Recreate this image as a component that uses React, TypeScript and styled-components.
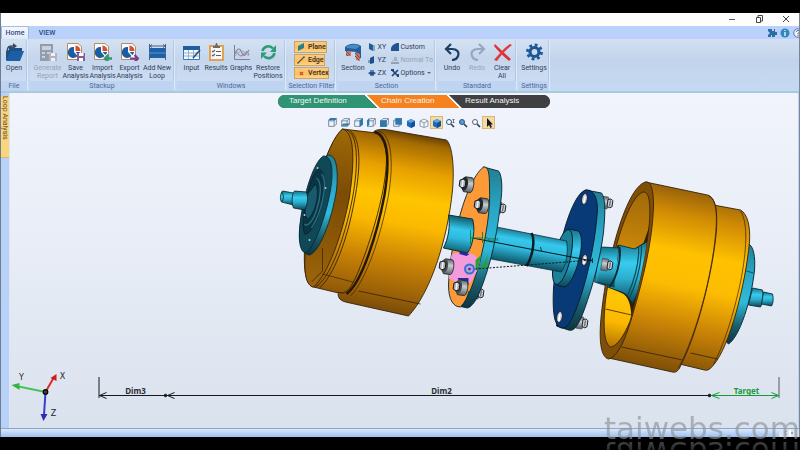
import React from 'react';
import styled, { createGlobalStyle, css } from 'styled-components';

const GlobalStyle = createGlobalStyle`
  * { box-sizing: border-box; }
  html, body, #root { height: 100%; }
  body {
    margin: 0;
    background: #000;
    overflow: hidden;
    font-family: Roboto, "Noto Sans", sans-serif;
    font-size: 7px;
    line-height: 8px;
    color: #2c3d5c;
  }
  button {
    font: inherit;
    color: inherit;
    background: none;
    border: 0;
    padding: 0;
    margin: 0;
  }
  svg { display: block; flex: none; }
`;

const Screen = styled.div`
  position: relative;
  height: 100vh;
  padding: 13px 0;
  overflow: hidden;
  background: #000;
`;

const Window = styled.div`
  height: 100%;
  display: flex;
  flex-direction: column;
  border-left: 1px solid #6d7d96;
  border-right: 1px solid #7a8595;
  background: #bcd3f8;
  overflow: hidden;
`;

const TitleBar = styled.header`
  flex: none;
  height: 13px;
  display: flex;
  justify-content: flex-end;
  background: #fdfdfe;
`;

const CaptionButton = styled.button`
  width: 27px;
  padding-bottom: 2px;
  display: flex;
  align-items: center;
  justify-content: center;
`;

const TabBar = styled.nav`
  flex: none;
  height: 13px;
  display: flex;
  background: #bad1fc;
`;

const Tab = styled.button<{ $active?: boolean }>`
  width: ${p => (p.$active ? 28 : 36)}px;
  font-weight: 500;
  color: #2f4a78;
  ${p => p.$active && css`
    background: linear-gradient(#f5f9ff, #dfe9f8);
    border: 1px solid #9dbbe6;
    border-bottom: 0;
    border-radius: 2px 2px 0 0;
  `}
`;

const TabTools = styled.div`
  margin-left: auto;
  margin-right: -4px;
  display: flex;
  align-items: center;
  gap: 3px;
`;

const Ribbon = styled.div`
  flex: none;
  display: flex;
  align-items: flex-start;
  gap: 2px;
  height: 54px;
  padding-top: 1px;
  background: linear-gradient(#d3e0f1, #c2d4ec 40%, #c6d9f2);
  border-bottom: 2px solid #a9c9dc;
`;

const Group = styled.section<{ $w: number }>`
  width: ${p => p.$w}px;
  height: 51px;
  flex: none;
  display: flex;
  flex-direction: column;
  border-right: 1px solid #dfeaf8;
  border-radius: 2px;
  background: linear-gradient(#d4e1f2, #c5d6ed 35%, #cfdef3);
  box-shadow: inset -1px 0 0 #b1c7e5;
`;

const GroupBody = styled.div`
  flex: 1;
  display: flex;
  justify-content: center;
  padding-top: 3px;
`;

const GroupCaption = styled.div`
  height: 10px;
  line-height: 10px;
  text-align: center;
  white-space: nowrap;
  color: #4a6899;
  background: #bfd4f1;
`;

const ToolButton = styled.button<{ $w: number }>`
  width: ${p => p.$w}px;
  flex: none;
  display: flex;
  flex-direction: column;
  align-items: center;
  gap: 3px;
  white-space: pre;
  &:disabled { color: #98a3b5; }
`;

const FilterColumn = styled.div`
  display: flex;
  flex-direction: column;
  align-items: flex-start;
  gap: 1px;
  margin-top: -2px;
`;

const FilterButton = styled.button<{ $w: number }>`
  width: ${p => p.$w}px;
  height: 12px;
  display: flex;
  align-items: center;
  gap: 3px;
  padding-left: 2px;
  color: #3d3526;
  font-weight: 600;
  background: linear-gradient(#f9c988, #fdbf62 60%, #ffd587);
  border: 1px solid #cda363;
`;

const SmallColumn = styled.div<{ $w: number }>`
  width: ${p => p.$w}px;
  display: flex;
  flex-direction: column;
  gap: 5px;
`;

const SmallButton = styled.button`
  height: 8px;
  display: flex;
  align-items: center;
  gap: 2px;
  white-space: nowrap;
  &:disabled { color: #98a3b5; }
`;

const Workspace = styled.main`
  flex: 1;
  min-height: 0;
  display: flex;
`;

const Dock = styled.aside`
  width: 9px;
  flex: none;
  padding-top: 3px;
  border-right: 1px solid #dbe7f8;
  background: #b7d1f7;
`;

const DockTab = styled.button`
  display: block;
  width: 8px;
  height: 62px;
  writing-mode: vertical-rl;
  text-align: left;
  white-space: nowrap;
  color: #5d502b;
  background: #fbd57a;
  border-bottom: 1px solid #e0b95c;
`;

const Canvas = styled.div`
  flex: 1;
  min-width: 0;
  display: grid;
  margin-right: 1px;
  background: linear-gradient(#f1f4fc, #e8edf7 45%, #dae2ed);
`;

const Scene = styled.svg`
  grid-area: 1 / 1;
  width: 100%;
  height: 100%;
  min-height: 0;
`;

const Overlay = styled.div`
  grid-area: 1 / 1;
  z-index: 1;
  justify-self: center;
  align-self: start;
  padding-top: 2px;
  padding-left: 20px;
`;

const Steps = styled.div`
  display: flex;
  height: 13px;
  border-radius: 7px;
  overflow: hidden;
  background: #403f42;
`;

const Step = styled.button<{ $w: number; $pad: number; $bg: string; $prev?: string }>`
  width: ${p => p.$w}px;
  padding-left: ${p => p.$pad}px;
  padding-bottom: 2px;
  text-align: left;
  font: 8px/11px "Liberation Sans", Arial, sans-serif;
  color: #f4f4f0;
  background: ${p => p.$prev
    ? `linear-gradient(45deg, ${p.$prev} 9px, #fff 9px 10px, ${p.$bg} 11px)`
    : p.$bg};
`;

const ViewBar = styled.div`
  display: flex;
  justify-content: center;
  padding: 8px 7px 0 0;
`;

const ViewButton = styled.button<{ $on?: boolean }>`
  width: 13px;
  height: 13px;
  display: grid;
  place-items: center;
  ${p => p.$on && css`
    background: #f3dba6;
    border: 1px solid #d9b877;
  `}
`;

const StatusBar = styled.footer`
  flex: none;
  height: 9px;
  display: flex;
  justify-content: flex-end;
  border-top: 1px solid #8fa5c4;
  background: linear-gradient(#dce9fc, #b4cff4 60%, #9fc0ec);
`;

const Grip = styled.div`
  width: 20px;
  display: grid;
  place-items: center;
  background: #d8e2f1;
`;

const Watermark = styled.div`
  position: absolute;
  right: 0;
  bottom: 10px;
  height: 23px;
  font: 31px/23px "DejaVu Sans", sans-serif;
  color: rgba(142, 147, 154, 0.66);
  -webkit-box-reflect: below 1px linear-gradient(transparent, rgba(0, 0, 0, 0.7));
`;

/* ---------- ribbon icons ---------- */

type P = { children: React.ReactNode; w?: number; h?: number; box?: string };
const Ico = ({ children, w = 19, h = 18, box }: P) => (
  <svg width={w} height={h} viewBox={box || `0 0 ${w} ${h}`} fill="none" aria-hidden="true">{children}</svg>
);

const OpenIcon = () => (
  <Ico>
    <path d="M1 8V17H3L7 8H17V5H10L8 4H4V7Z" fill="#1f4f84" />
    <path d="M6 8H19L15 18H1Z" fill="#1d5fa6" />
    <path d="M2 9C2 4 4 2.500 9 3" stroke="#3d4957" strokeWidth="1.500" />
    <path d="M8 0L12 3L8 6Z" fill="#3d4957" />
  </Ico>
);
const GenerateIcon = () => (
  <Ico>
    <path d="M2 1H15V18H2Z" fill="#929cab" />
    <path d="M4 3H13V7H4ZM4 9H7V11H4ZM9 9H13V11H9ZM4 13H7V15H4Z" fill="#c9d1dc" />
    <path d="M11 10H19V18H11Z" fill="#b4b3c3" />
    <path d="M13 10H17V13H13ZM13 15H17V18H13Z" fill="#eef1f6" />
  </Ico>
);
const Report = ({ children }: { children: React.ReactNode }) => (
  <Ico>
    <path d="M1.500 .5H12L15.500 3.500V16.500H1.500Z" fill="#fbfbfc" stroke="#b58d68" />
    <path d="M8 4V9L11.500 13A5.500 5.500 0 1 1 8 4Z" fill="#1c5da2" />
    <path d="M9.500 2.500A5.500 5.500 0 0 1 14.500 8H9.500Z" fill="#d5502f" />
    <path d="M9.500 9H14A5 5 0 0 1 12.500 12Z" fill="#1c5da2" />
    {children}
  </Ico>
);
const SaveIcon = () => (
  <Report>
    <path d="M11 10H19V18H11Z" fill="#8b5c92" />
    <path d="M13 10H17.500V13H13ZM13 15H17V18H13Z" fill="#fff" />
  </Report>
);
const ImportIcon = () => (
  <Report><path d="M19 15.500H13M15.500 12L12 15.500L15.500 19" stroke="#2f9b6c" strokeWidth="2.500" /></Report>
);
const ExportIcon = () => (
  <Report><path d="M10 15.500H17M14.500 12L18 15.500L14.500 19" stroke="#7b3d86" strokeWidth="2.200" /></Report>
);
const LoopIcon = () => (
  <Ico>
    <path d="M1 5H18V9H1ZM1 11H18V15H1Z" fill="#1e61a8" />
    <path d="M1.500 1V17M17.500 1V17M2 3H17M4 1.500L2 3L4 4.500M15 1.500L17 3L15 4.500" stroke="#40628c" />
    <path d="M1 10H18" stroke="#3b79b8" strokeWidth="2" />
  </Ico>
);
const InputIcon = () => (
  <Ico>
    <path d="M1.500 3.500H17.500V16.500H1.500Z" fill="#f6f9fd" stroke="#3a78b4" />
    <path d="M1 3H18V7H1Z" fill="#215e9f" />
    <path d="M2 10H17M2 13H17M6.500 7V16M11.500 7V16" stroke="#8fb3d6" />
    <path d="M11 15L18 7" stroke="#33526f" strokeWidth="1.600" />
  </Ico>
);
const ResultsIcon = () => (
  <Ico>
    <path d="M2 2H17V18H2Z" fill="#e2a254" />
    <path d="M4 4H15V16H4Z" fill="#fbfaf8" />
    <path d="M6 3H8L9 0H10L11 3H13V5H6Z" fill="#6f6a68" />
    <path d="M5 8L6 9L8 7M9 8.500H14M5 12L6 13L8 11M9 12.500H14" stroke="#5c5d66" strokeWidth="1.100" />
  </Ico>
);
const GraphsIcon = () => (
  <Ico>
    <path d="M2.500 2V16.500H18" stroke="#75859d" />
    <path d="M3 11C6 4 8 5 10 10S14 11 17 7" stroke="#7a879b" strokeWidth="1.200" />
    <path d="M3 8C6 10 8 15 11 12S15 6 17 12" stroke="#ac8d97" strokeWidth="1.200" />
    <path d="M3 13L7 9L11 8L17 13" stroke="#9aaabf" />
  </Ico>
);
const RestoreIcon = () => (
  <Ico>
    <path d="M3.500 8A6 6 0 0 1 14 5.500M15.500 10A6 6 0 0 1 5 13" stroke="#2f9b77" strokeWidth="2.600" />
    <path d="M17 2V9H11ZM2 16V9.500H8Z" fill="#2f9b77" />
  </Ico>
);
const SectionIcon = () => (
  <Ico>
    <path d="M1 4C5 0 13 0 17 3V15L12 17V9L1 8Z" fill="#1f5f9f" />
    <path d="M2 4C6 1 12 1 16 3L12 6L3 5Z" fill="#4a89c0" />
    <path d="M2 8H7V13H2ZM11 9L16 11V18L12 17Z" fill="#c97762" />
    <path d="M2 8L6 12M2 11L4 13M11 10L16 15M11 13L15 17" stroke="#7d4f55" />
  </Ico>
);
const UndoIcon = () => (
  <Ico>
    <path d="M4 6H9C14 6 16.500 9 15 13C14 15.500 12 17 9 17" stroke="#1c3f66" strokeWidth="2.200" />
    <path d="M8 1L3 6L8 11" stroke="#1c3f66" strokeWidth="2.200" />
  </Ico>
);
const RedoIcon = () => (
  <Ico>
    <path d="M15 6H10C5 6 2.500 9 4 13C5 15.500 7 17 10 17" stroke="#97a7bd" strokeWidth="2.200" />
    <path d="M11 1L16 6L11 11" stroke="#97a7bd" strokeWidth="2.200" />
  </Ico>
);
const ClearIcon = () => (
  <Ico>
    <path d="M2 1C7 6 12 11 18 16L16 18C10 13 5 8 1 3Z" fill="#dc3136" />
    <path d="M17 1L19 2C13 7 8 12 4 18L1 17C6 11 11 5 17 1Z" fill="#e03a3d" />
  </Ico>
);
const GearIcon = () => (
  <Ico>
    <circle cx="9.500" cy="9" r="4.500" stroke="#1c5694" strokeWidth="3.200" />
    <circle cx="9.500" cy="9" r="7" stroke="#1c5694" strokeWidth="2.800" strokeDasharray="2.750 2.750" />
  </Ico>
);

const small: Record<string, React.ReactNode> = {
  xy: <><path d="M1 0L5 2V8L1 6Z" fill="#1f5f92" /><path d="M5 2H7V8H5Z" fill="#85a9c9" /></>,
  yz: <><path d="M2 2L6 0V7L2 8Z" fill="#1f4f88" /><path d="M0 4H2V7H0Z" fill="#7a9cc2" /></>,
  zx: <><path d="M0 4L4 2L8 4L4 7Z" fill="#1f4f88" /><path d="M2 1H6V3H2ZM2 6H6V7H2Z" fill="#5981ae" /></>,
  custom: <path d="M0 5C1 2 4 0 8 0V8H0Z" fill="#1d5592" />,
  normal: <><path d="M0 6H8V8H0Z" fill="#8fa0b7" /><path d="M3 1H6V5H3ZM1 4H7V5H1Z" fill="#a6b3c5" /></>,
  options: <><path d="M1 1L7 7M7 1L1 7" stroke="#1f4678" strokeWidth="1.700" /><path d="M0 0H3V2H0ZM6 5H8V8H6Z" fill="#1f4678" /></>,
  plane: <path d="M1 3L7 0V5L1 8Z" fill="#24838b" />,
  edge: <path d="M1 7L7 1M0 7H2M6 1H8" stroke="#59513b" strokeWidth="1.100" />,
  vertex: <path d="M3 3L6 6M6 3L3 6" stroke="#c55527" strokeWidth="1.400" />,
};
const Small = ({ k }: { k: string }) => <Ico w={8} h={8}>{small[k]}</Ico>;

/* ---------- view toolbar icons ---------- */

const cubeLines = 'M1.500 3.500H6.500V8.500H1.500ZM1.500 3.500L3.500 1.500H8.500L6.500 3.500M8.500 1.500V6.500L6.500 8.500';
const faces = [
  'M1 3L3 1H9L7 3Z',
  'M1 8H7L9 6H3Z',
  'M6 3L9 1V7L6 9Z',
  'M1 3L3 1V7L1 9Z',
  'M1 3H7V9H1Z',
  'M3 1H9V7H3Z',
];
const FaceCube = ({ d }: { d: string }) => (
  <Ico w={11} h={11} box="0 0 10 10">
    <path d={cubeLines} stroke="#6b8298" strokeWidth=".8" />
    <path d={d} fill="#2d78ae" />
  </Ico>
);
const SolidCube = () => (
  <Ico w={10} h={10}>
    <path d="M1 3L5 1L9 3V8L5 10L1 8Z" fill="#1d69bd" />
    <path d="M1 3L5 1L9 3L5 5Z" fill="#5aa6e3" />
    <path d="M5 5L9 3V8L5 10Z" fill="#174f91" />
  </Ico>
);
const WireCube = () => (
  <Ico w={10} h={10}>
    <path d="M1 3L5 1L9 3V8L5 9.500L1 8ZM1 3L5 5L9 3M5 5V9" stroke="#8593a0" strokeWidth=".9" fill="#f5f7fb" />
  </Ico>
);
const Lens = ({ kind }: { kind: number }) => (
  <Ico w={10} h={10}>
    <circle cx="4" cy="4" r="2.500" stroke={kind === 2 ? '#5c6873' : '#245580'} fill={kind === 1 ? '#5e9bcc' : '#f5f8fc'} />
    <path d="M6 6L9 9" stroke="#263b4e" strokeWidth="1.600" />
    {kind === 0 && <path d="M8.500 1V5M7.500 2L8.500 1L9.500 2M7.500 4L8.500 5L9.500 4" stroke="#44617b" strokeWidth=".8" />}
  </Ico>
);
const Pointer = () => (
  <Ico w={10} h={10}><path d="M3 0V9L5 7L6.500 10L8 9L6.500 6.500H9Z" fill="#151719" /></Ico>
);

/* ---------- 3D model ---------- */

const Bolt = ({ x, y, dim }: { x: number; y: number; dim?: boolean }) => (
  <g transform={`translate(${x} ${y}) rotate(8)`}>
    <path d="M-2 -7H5C8 -6 8 7 5 8H-2C-4 5 -4 -4 -2 -7Z" fill="url(#steel)" stroke="#20262b" strokeWidth=".8" />
    <ellipse cx="-2" cy="0" rx="3.500" ry="7" fill={dim ? '#454d4e' : '#23292c'} />
    <path d="M-7 -3L-4 -4.500L-1 -3V3L-4 4.500L-7 3Z" fill="#a9b0b5" stroke="#111" strokeWidth=".9" />
    <path d="M-4 -3.500V3.500" stroke="#f6f8f9" strokeWidth="1.400" />
  </g>
);
const Nut = ({ x, y }: { x: number; y: number }) => (
  <g transform={`translate(${x} ${y}) rotate(8)`}>
    <path d="M-6 -6H0C2 -4 2 5 0 6H-6Z" fill="url(#steel)" stroke="#3b444a" strokeWidth=".6" />
    <path d="M0 -3.500L3 -4.500L5 -3V3L3 4.500L0 3.500Z" fill="#c9ced2" stroke="#181c1f" strokeWidth=".9" />
    <path d="M2.500 -3V3" stroke="#51585d" />
  </g>
);
const Hole = ({ x, y }: { x: number; y: number }) => (
  <g transform={`translate(${x} ${y}) rotate(10)`}>
    <ellipse rx="2.800" ry="5.500" fill="#c7cdd0" stroke="#101820" strokeWidth=".9" />
    <path d="M0 -3V4" stroke="#fff" strokeWidth="1.600" />
  </g>
);

const Model = () => (
  <Scene viewBox="10 93 787 335" preserveAspectRatio="xMidYMid meet" role="img" aria-label="Shaft assembly with dimension loop">
    <defs>
      <linearGradient id="drumL" gradientUnits="userSpaceOnUse" x1="410" y1="133" x2="377" y2="312">
        <stop offset="0" stopColor="#684006" />
        <stop offset=".05" stopColor="#a36a02" />
        <stop offset=".2" stopColor="#e7a000" />
        <stop offset=".36" stopColor="#ffc500" />
        <stop offset=".5" stopColor="#fbb900" />
        <stop offset=".72" stopColor="#c68005" />
        <stop offset=".9" stopColor="#985f08" />
        <stop offset="1" stopColor="#754909" />
      </linearGradient>
      <linearGradient id="drumR" gradientUnits="userSpaceOnUse" x1="692" y1="190" x2="655" y2="371">
        <stop offset="0" stopColor="#96600a" />
        <stop offset=".14" stopColor="#d08b04" />
        <stop offset=".34" stopColor="#ffc100" />
        <stop offset=".52" stopColor="#fdbc02" />
        <stop offset=".74" stopColor="#c98306" />
        <stop offset="1" stopColor="#7b4c08" />
      </linearGradient>
      <linearGradient id="coneL" gradientUnits="userSpaceOnUse" x1="345" y1="130" x2="318" y2="286">
        <stop offset="0" stopColor="#9e6906" />
        <stop offset=".4" stopColor="#7c4c05" />
        <stop offset=".75" stopColor="#8d5906" />
        <stop offset="1" stopColor="#9c650a" />
      </linearGradient>
      <linearGradient id="bore" gradientUnits="userSpaceOnUse" x1="640" y1="192" x2="612" y2="345">
        <stop offset="0" stopColor="#a16a09" />
        <stop offset=".45" stopColor="#d18c08" />
        <stop offset=".68" stopColor="#ffc706" />
        <stop offset=".85" stopColor="#fbb800" />
        <stop offset="1" stopColor="#b97a05" />
      </linearGradient>
      <linearGradient id="shaft" gradientUnits="userSpaceOnUse" x1="535" y1="231" x2="529" y2="267">
        <stop offset="0" stopColor="#16687b" />
        <stop offset=".3" stopColor="#35c8ed" />
        <stop offset=".55" stopColor="#2fb9dc" />
        <stop offset="1" stopColor="#0c4c5d" />
      </linearGradient>
      <linearGradient id="cyan" x1="0" y1="0" x2="0" y2="1">
        <stop offset="0" stopColor="#15728a" />
        <stop offset=".35" stopColor="#38ccef" />
        <stop offset=".6" stopColor="#2cadcd" />
        <stop offset="1" stopColor="#0b4554" />
      </linearGradient>
      <linearGradient id="rim" x1="0" y1="0" x2="0" y2="1">
        <stop offset="0" stopColor="#237e91" />
        <stop offset=".3" stopColor="#29a6c7" />
        <stop offset=".58" stopColor="#2fbbdc" />
        <stop offset=".82" stopColor="#1a5e6d" />
        <stop offset="1" stopColor="#0d3340" />
      </linearGradient>
      <linearGradient id="steel" x1="0" y1="0" x2="0" y2="1">
        <stop offset="0" stopColor="#5d666c" />
        <stop offset=".4" stopColor="#c9cdd1" />
        <stop offset="1" stopColor="#596168" />
      </linearGradient>
      <clipPath id="face1">
        <path id="face1path" d="M483 167C475 173 467 190 461 210C454 233 449 260 448 285C448 300 453 307 460 307C468 299 474 280 479 263C486 235 490 210 489 187C489 174 488 166 483 167Z" />
      </clipPath>
      <clipPath id="boreClip">
        <path d="M590 240L606 250L643 185C651 190 651 205 649 222C646 253 638 288 630 320L590 320Z" />
      </clipPath>
    </defs>

    {/* left pulley */}
    <g stroke="#35210a" strokeWidth=".9" strokeLinejoin="round">
      <path d="M342 129L376 133C392 145 390 190 374 240C364 270 352 295 338 293L313 287C306 286 303 272 304 250C309 205 325 145 342 129Z" fill="url(#drumL)" />
      <path d="M342 129C353 132 355 155 349 197C342 235 327 275 313 287C305 286 303 270 305 250C310 205 325 143 342 129Z" fill="url(#coneL)" />
      <path d="M346 130C358 134 358 165 352 198C344 240 329 279 315 287M350 131C361 140 360 169 354 200C347 240 333 276 319 288" fill="none" />
      <path d="M322 248L322 271L311 282M322 274L356 283" fill="none" strokeWidth=".7" />
      <path d="M373 132C376 129 382 129 388 130L446 140C452 146 454 168 452 190C447 241 429 294 408 316L345 302C338 300 337 296 338 292C346 297 352 285 358 271C371 239 386 190 386 158C385 141 381 134 373 132Z" fill="url(#drumL)" />
      <path d="M374 132C389 135 389 165 384 195C377 232 362 282 346 294" fill="none" stroke="#241605" strokeWidth="2.400" />
      <path d="M378 131C392 134 393 165 388 195C381 234 366 280 350 296" fill="none" strokeWidth=".7" />
      <path d="M358 291L420 304" strokeWidth=".8" />
    </g>
    <g stroke="#06232c" strokeWidth=".8">
      <path d="M328 155C336 155 338 170 336 190C331 221 319 252 309 255C302 254 299 246 299 232C301 202 316 160 328 155Z" fill="url(#rim)" />
      <path d="M323 156C332 156 333 172 330 190C325 219 313 249 305 253C300 252 298 242 299 230C301 202 312 162 323 156Z" fill="#104858" />
      <path d="M319 169C325 172 325 190 321 205C317 221 309 236 304 234C301 226 303 207 308 190C311 178 315 170 319 169Z" fill="#0b3542" />
      <path d="M316 178C322 182 320 199 316 210C313 220 307 228 304 224M321 174C328 182 321 213 311 228" fill="none" stroke="#277185" strokeWidth="1.300" />
      <path d="M315 184C319 190 317 209 308 219C303 218 304 203 308 193Z" fill="#185a6e" />
      <path d="M282 191L293 193V205L281 202C279 199 280 193 282 191Z" fill="url(#cyan)" />
      <path d="M294 191L306 192C308 197 307 206 304 210L293 208C291 204 291 194 294 191Z" fill="url(#cyan)" />
      <path d="M281 192C284 195 283 200 281 202" fill="none" />
    </g>
    <g fill="#b7cbd1"><circle cx="317" cy="168" r="1" /><circle cx="325" cy="188" r="1" /><circle cx="309" cy="240" r="1" /><circle cx="304" cy="215" r="1" /></g>

    {/* second flange */}
    <Nut x={607} y={203} />
    <Nut x={582} y={323} />
    <path d="M599 247L622 250V291L594 282Z" fill="url(#cyan)" stroke="#073440" strokeWidth=".8" />
    <g stroke="#061b2b" strokeWidth=".9">
      <path d="M585 190L601 193C605 199 605 211 603 232C600 258 592 287 584 309C578 326 573 332 568 330L556 326Z" fill="url(#rim)" />
      <path d="M585 190C592 189 597 196 597 210C595 240 588 273 580 297C574 315 568 329 561 328C553 326 552 310 553 288C556 252 570 195 585 190Z" fill="#083a78" />
      <path d="M568 229L578 231C583 236 581 252 577 265C573 278 568 286 564 287L556 285Z" fill="url(#cyan)" />
      <ellipse cx="562" cy="257" rx="8" ry="28" transform="rotate(13 562 257)" fill="#1c8099" />
    </g>
    <Hole x={584} y={199} />
    <Hole x={584} y={260} />
    <Hole x={559} y={317} />

    {/* middle shaft */}
    <path d="M486 225L566 241C568 251 566 264 561 272L480 257Z" fill="url(#shaft)" stroke="#073440" strokeWidth=".8" />
    <path d="M531 233C535 240 532 257 526 266" fill="none" stroke="#071b22" strokeWidth="2.400" />

    {/* first flange */}
    <Nut x={500} y={208} />
    <Nut x={478} y={293} />
    <g stroke="#07252e" strokeWidth=".9">
      <path d="M483 167L498 171C502 176 502 190 500 204C497 229 493 252 486 273C480 292 474 306 467 308L458 306Z" fill="url(#rim)" />
      <use href="#face1path" fill="#fb9a37" />
    </g>
    <g clipPath="url(#face1)">
      <path d="M440 262C452 250 472 247 481 263L470 283L455 282L444 276Z" fill="#f49bdb" />
      <path d="M459 251L469 254L466 256L459 254Z" fill="#3022a8" />
      <path d="M475 260L484 252V270L475 270Z" fill="#2f9e35" />
      <path d="M457 278H468V285L459 282Z" fill="#2b2ba0" />
      <path d="M468 291L480 290V300H465Z" fill="#164b3a" />
    </g>
    <path d="M448 215L472 219C475 228 473 245 467 253L443 248C448 238 450 226 448 215Z" fill="url(#shaft)" stroke="#06303c" />
    <path d="M481 267C484 262 486 258 487 256L486 268L481 270Z" fill="#2f9e35" />
    <Bolt x={466} y={184} />
    <Bolt x={481} y={205} />
    <Bolt x={446} y={266} dim />
    <Bolt x={460} y={287} dim />
    <circle cx="469" cy="269" r="4.500" fill="#b5a0e2" stroke="#3a6fd2" strokeWidth="2" />
    <circle cx="469" cy="269" r="1.300" fill="#5a237b" />

    {/* right pulley */}
    <path d="M748 244C753 246 755 257 754 270C751 300 739 337 728 344L724 340L745 270Z" fill="url(#rim)" stroke="#06303c" />
    <path d="M746 271L753 273" stroke="#07303b" strokeWidth=".7" />
    <path d="M752 288L762 290C763 296 762 304 760 307L748 305Z" fill="url(#cyan)" stroke="#06303c" strokeWidth=".9" />
    <path d="M763 292L772 294C773 298 773 303 771 306L761 304Z" fill="url(#cyan)" stroke="#06303c" strokeWidth=".9" />
    <g stroke="#35210a" strokeWidth=".9" strokeLinejoin="round">
      <path d="M713 205L740 210C747 214 750 226 749 242C745 285 729 347 713 365C710 369 707 371 704 370L679 364Z" fill="url(#drumR)" />
      <path d="M740 211C748 223 746 252 740 282C733 315 723 346 713 364" fill="none" strokeWidth=".7" />
      <path d="M645 182L707 195C715 197 717 211 716 230C712 275 696 335 680 366C678 371 675 373 672 372L608 358Z" fill="url(#drumR)" />
      <path d="M708 196C716 199 717 212 715 235C711 277 696 334 678 368" fill="none" strokeWidth=".7" />
      <path d="M645 182C651 181 653 191 653 207C652 240 643 278 632 315C626 336 618 357 608 359C600 357 599 340 600 324C604 270 624 188 645 182Z" fill="#7f4f07" />
      <path d="M643 192C649 192 650 204 649 222C646 253 638 288 630 320C624 335 617 346 610 347C604 344 603 330 604 312C606 276 625 196 643 192Z" fill="url(#bore)" />
      <path d="M605 309L631 315M621 347L682 360M690 353L717 359" strokeWidth=".8" />
    </g>
    <g clipPath="url(#boreClip)">
      <path d="M649 226L643 243L632 250L617 245C613 260 609 275 608 287L621 293C628 296 630 304 631 316C639 287 648 253 649 226Z" fill="#321d05" />
      <path d="M618 245L634 249L648 241C649 259 640 288 632 304C629 299 627 294 621 292L607 287C613 278 618 262 618 245Z" fill="url(#cyan)" stroke="#06303c" strokeWidth=".9" />
      <path d="M638 247C639 262 633 282 627 296M641 246C641 265 635 285 629 298" fill="none" stroke="#09485a" strokeWidth="1.200" />
    </g>
    <path d="M602 247L618 248L614 287L597 282Z" fill="url(#cyan)" />
    <path d="M602 247L618 248M614 287L597 282" stroke="#06303c" strokeWidth=".8" />
    <path d="M619 247C621 260 616 278 609 287" fill="none" stroke="#062832" strokeWidth="1.800" />
    <Nut x={607} y={265} />

    {/* loop path */}
    <g fill="none" stroke="#07191d">
      <path d="M472 238L592 261" strokeWidth="1" />
      <path d="M475 269L592 260" strokeWidth="1" strokeDasharray="2 1.500" />
      <path d="M540 247L541 251M592 258V263" strokeWidth=".8" />
      <path d="M470 230V244M470 238H482M482 232V243" stroke="#12883b" />
    </g>
    <text x="484" y="241" fontFamily="Liberation Sans, Arial, sans-serif" fontSize="5" fill="#12682b">Target</text>

    {/* dimension loop */}
    <g stroke="#16191d" fill="#16191d">
      <path d="M98.500 377V398M99 395.500H709" strokeWidth="1" />
      <path d="M106 392.500L99 395.500L106 398.500M174 392.500L167 395.500L174 398.500" fill="none" />
      <circle cx="165" cy="395.500" r="1.300" />
      <circle cx="709" cy="395.500" r="1.300" />
      <path d="M778.500 377V398" stroke="#555b60" />
    </g>
    <path d="M711 395.500H778M719 392.500L711 395.500L719 398.500M771 392.500L778 395.500L771 398.500" fill="none" stroke="#159a35" />
    <g fontFamily="Noto Sans, sans-serif" fontSize="8" fontWeight="bold" textAnchor="middle" fill="#2b2f34">
      <text x="135" y="394">Dim3</text>
      <text x="441" y="394">Dim2</text>
      <text x="746" y="394" fill="#1c9a3c">Target</text>
    </g>

    {/* axis triad */}
    <path d="M45 392L18 386.500" stroke="#46c455" strokeWidth="2" />
    <path d="M11 385L19 383V390Z" fill="#35b446" />
    <path d="M45 392L53 378" stroke="#e02a2a" strokeWidth="2" />
    <path d="M56 374L56 381L50 378Z" fill="#cf1c1c" />
    <path d="M45 392L43.500 415" stroke="#3c3ccc" strokeWidth="2" />
    <path d="M43 421L40 414H47Z" fill="#2b2bb4" />
    <circle cx="45" cy="392" r="2.200" fill="#444" stroke="#0a0a0a" strokeWidth="1.400" />
    <g fontFamily="DejaVu Sans, sans-serif" fontSize="8" textAnchor="middle" fill="#22262b">
      <text x="21" y="380">Y</text>
      <text x="62" y="379">X</text>
      <text x="53" y="416">Z</text>
    </g>
  </Scene>
);

/* ---------- app ---------- */

type Tool = { label: string; icon: React.ReactNode; w: number; off?: boolean };
const stackup: Tool[] = [
  { label: 'Generate\nReport', icon: <GenerateIcon />, w: 29, off: true },
  { label: 'Save\nAnalysis', icon: <SaveIcon />, w: 27 },
  { label: 'Import\nAnalysis', icon: <ImportIcon />, w: 27 },
  { label: 'Export\nAnalysis', icon: <ExportIcon />, w: 27 },
  { label: 'Add New\nLoop', icon: <LoopIcon />, w: 28 },
];
const windows: Tool[] = [
  { label: 'Input', icon: <InputIcon />, w: 24 },
  { label: 'Results', icon: <ResultsIcon />, w: 25 },
  { label: 'Graphs', icon: <GraphsIcon />, w: 25 },
  { label: 'Restore\nPositions', icon: <RestoreIcon />, w: 29 },
];
const standard: Tool[] = [
  { label: 'Undo', icon: <UndoIcon />, w: 25 },
  { label: 'Redo', icon: <RedoIcon />, w: 25, off: true },
  { label: 'Clear\nAll', icon: <ClearIcon />, w: 25 },
];

const Tools = ({ items }: { items: Tool[] }) => (
  <>
    {items.map(t => (
      <ToolButton key={t.label} $w={t.w} disabled={t.off}>
        {t.icon}
        <span>{t.label}</span>
      </ToolButton>
    ))}
  </>
);

const RibbonGroup = ({ name, w, children }: { name: string; w: number; children: React.ReactNode }) => (
  <Group $w={w} aria-label={name}>
    <GroupBody>{children}</GroupBody>
    <GroupCaption>{name}</GroupCaption>
  </Group>
);

export default function App() {
  return (
    <Screen>
      <GlobalStyle />
      <Window>
        <TitleBar>
          <CaptionButton aria-label="Minimize"><Ico w={8} h={8}><path d="M1 4.500H7" stroke="#555" /></Ico></CaptionButton>
          <CaptionButton aria-label="Restore"><Ico w={8} h={8}><path d="M1.500 2.500H5.500V7.500H1.500ZM3 2V.5H7.500V6H6" stroke="#444" /></Ico></CaptionButton>
          <CaptionButton aria-label="Close"><Ico w={8} h={8}><path d="M1 1L7 7M7 1L1 7" stroke="#444" /></Ico></CaptionButton>
        </TitleBar>
        <TabBar>
          <Tab $active>Home</Tab>
          <Tab>VIEW</Tab>
          <TabTools>
            <button aria-label="Add-ins"><Ico w={10} h={10}><path d="M1 1H5V3H7V1H8V4H10V7H8V9H5V7H4V9H1V7L3 5L1 3Z" fill="#2c6ca0" /></Ico></button>
            <button aria-label="About"><Ico w={10} h={10}><circle cx="5" cy="5" r="4.500" fill="#2f88bd" /><path d="M5 2V3M5 4V8" stroke="#d8eef8" strokeWidth="1.500" /></Ico></button>
            <button aria-label="Help"><Ico w={10} h={10}><circle cx="5" cy="5" r="4.200" fill="#f3f7fc" stroke="#51759f" /><path d="M3.500 4C3.500 2 6.500 2 6.500 4L5 5.500V6.500M5 7.200V8" stroke="#31567d" /></Ico></button>
          </TabTools>
        </TabBar>
        <Ribbon>
          <RibbonGroup name="File" w={27}><ToolButton $w={26}><OpenIcon /><span>Open</span></ToolButton></RibbonGroup>
          <RibbonGroup name="Stackup" w={145}><Tools items={stackup} /></RibbonGroup>
          <RibbonGroup name="Windows" w={109}><Tools items={windows} /></RibbonGroup>
          <RibbonGroup name="Selection Filter" w={48}>
            <FilterColumn>
              <FilterButton $w={33}><Small k="plane" />Plane</FilterButton>
              <FilterButton $w={31}><Small k="edge" />Edge</FilterButton>
              <FilterButton $w={35}><Small k="vertex" />Vertex</FilterButton>
            </FilterColumn>
          </RibbonGroup>
          <RibbonGroup name="Section" w={98}>
            <ToolButton $w={29}><SectionIcon /><span>Section</span></ToolButton>
            <SmallColumn $w={23}>
              <SmallButton><Small k="xy" />XY</SmallButton>
              <SmallButton><Small k="yz" />YZ</SmallButton>
              <SmallButton><Small k="zx" />ZX</SmallButton>
            </SmallColumn>
            <SmallColumn $w={44}>
              <SmallButton><Small k="custom" />Custom</SmallButton>
              <SmallButton disabled><Small k="normal" />Normal To</SmallButton>
              <SmallButton><Small k="options" />Options<Ico w={4} h={4}><path d="M0 1H4L2 3Z" fill="#5b6b84" /></Ico></SmallButton>
            </SmallColumn>
          </RibbonGroup>
          <RibbonGroup name="Standard" w={79}><Tools items={standard} /></RibbonGroup>
          <RibbonGroup name="Settings" w={31}><ToolButton $w={30}><GearIcon /><span>Settings</span></ToolButton></RibbonGroup>
        </Ribbon>
        <Workspace>
          <Dock><DockTab>Loop Analysis</DockTab></Dock>
          <Canvas>
            <Model />
            <Overlay>
              <Steps>
                <Step $w={87} $pad={11} $bg="#2f9473">Target Definition</Step>
                <Step $w={82} $pad={16} $bg="#f5811f" $prev="#2f9473">Chain Creation</Step>
                <Step $w={103} $pad={18} $bg="#403f42" $prev="#f5811f">Result Analysis</Step>
              </Steps>
              <ViewBar>
                {faces.map((d, i) => <ViewButton key={d} aria-label={`View ${i + 1}`}><FaceCube d={d} /></ViewButton>)}
                <ViewButton aria-label="Shaded"><SolidCube /></ViewButton>
                <ViewButton aria-label="Wireframe"><WireCube /></ViewButton>
                <ViewButton $on aria-label="Shaded with edges"><SolidCube /></ViewButton>
                <ViewButton aria-label="Zoom"><Lens kind={0} /></ViewButton>
                <ViewButton aria-label="Zoom area"><Lens kind={1} /></ViewButton>
                <ViewButton aria-label="Zoom to fit"><Lens kind={2} /></ViewButton>
                <ViewButton $on aria-label="Select"><Pointer /></ViewButton>
              </ViewBar>
            </Overlay>
          </Canvas>
        </Workspace>
        <StatusBar>
          <Grip><Ico w={10} h={6}><path d="M3 1A2 2 0 0 0 3 5" stroke="#8d8f98" /><path d="M6 0V6" stroke="#fff" strokeWidth="2" /><path d="M8 2V4" stroke="#5b6474" /></Ico></Grip>
        </StatusBar>
      </Window>
      <Watermark>taiwebs.com</Watermark>
    </Screen>
  );
}
